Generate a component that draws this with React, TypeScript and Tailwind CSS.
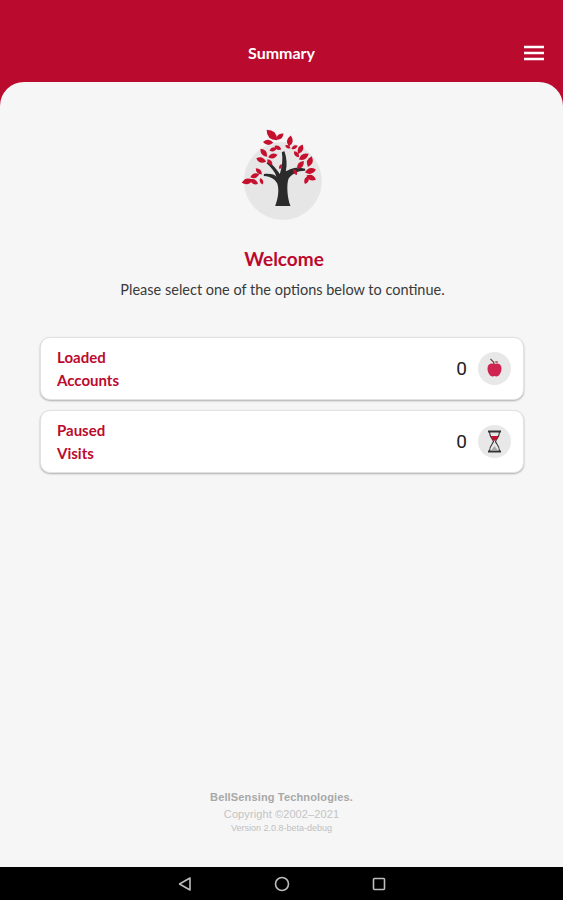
import React from "react";

// leaves of the tree: x, y, length, angle (in the 480x360 zoom space of the logo)
const leaves: [number, number, number, number][] = [
  [214, 75, 34, 45], [238, 80, 22, -40], [203, 97, 24, 5], [232, 113, 18, 30],
  [268, 93, 26, -80], [262, 110, 14, 30], [282, 112, 16, -30], [300, 118, 24, -65],
  [288, 133, 18, 50], [310, 140, 26, -30], [328, 155, 26, -70], [190, 128, 24, 50],
  [218, 118, 18, -20], [217, 138, 22, -15], [182, 150, 24, 20], [208, 157, 18, 50],
  [240, 170, 13, -70], [300, 165, 24, -50], [284, 186, 16, 60], [330, 183, 26, -15],
  [332, 203, 24, 25], [318, 210, 20, -70], [175, 184, 20, 45], [163, 197, 22, -20],
  [140, 214, 26, -15], [160, 215, 22, 30], [183, 214, 16, 70],
];

function TreeLogo() {
  return (
    <svg viewBox="4.5 0 480 360" className="w-[160px] h-[120px] block">
      <circle cx="247" cy="213" r="117" fill="#e6e6e6" />
      <path
        d="M224 288 C234 262 236 238 230 220 C222 206 212 200 190 198 L190 192 C212 190 222 194 228 200 C222 184 212 172 198 160 L204 154 C218 166 228 178 238 192 C244 172 248 150 244 126 L252 124 C259 146 260 166 256 184 C268 178 284 168 314 176 L314 182 C290 182 274 192 264 206 C258 224 260 262 270 288 Z"
        fill="#2b2b2b"
      />
      {leaves.map(([x, y, l, a], i) => {
        const s = l * 1.3;
        return (
          <path
            key={i}
            d={`M${-s / 2} 0 Q0 ${-s * 0.5} ${s / 2} 0 Q0 ${s * 0.5} ${-s / 2} 0Z`}
            fill="#c5102e"
            transform={`translate(${x} ${y}) rotate(${a})`}
          />
        );
      })}
    </svg>
  );
}

function AppleIcon() {
  return (
    <svg viewBox="0 0 33 33" className="w-[33px] h-[33px]">
      <circle cx="16.5" cy="16.5" r="16.5" fill="#e8e8e8" />
      <path d="M12.5 7 L15.5 10 L16.3 13" fill="none" stroke="#6b4a3a" strokeWidth="1.3" />
      <path d="M16.5 10 Q18.5 8.5 20.5 10 Q18.5 11.5 16.5 10Z" fill="#8a3a4a" />
      <path
        d="M16.5 12 C20 10.5 23.5 12 23.5 16.5 C23.5 21 20.5 24.5 18.5 24.5 C17.5 24.5 17 24 16.5 24 C16 24 15.5 24.5 14.5 24.5 C12.5 24.5 9.5 21 9.5 16.5 C9.5 12 13 10.5 16.5 12Z"
        fill="#cf2350"
      />
    </svg>
  );
}

function HourglassIcon() {
  return (
    <svg viewBox="0 0 33 33" className="w-[33px] h-[33px]">
      <circle cx="16.5" cy="16.5" r="16.5" fill="#e8e8e8" />
      <path d="M10 6.5 H23 M10 26.5 H23" stroke="#333" strokeWidth="1.8" />
      <path
        d="M11.5 7 C11.5 12 15 14.5 15.5 16.5 C15 18.5 11.5 21 11.5 26 M21.5 7 C21.5 12 18 14.5 17.5 16.5 C18 18.5 21.5 21 21.5 26"
        fill="none"
        stroke="#333"
        strokeWidth="1.1"
      />
      <path d="M12.5 11 H20.5 C19.8 13.5 17.5 15 16.5 16 C15.5 15 13.2 13.5 12.5 11Z" fill="#c5102e" />
      <path d="M13 25.5 L16.5 21 L20 25.5Z" fill="#aaa" />
    </svg>
  );
}

function SummaryCard({ top, bottom, icon }: { top: string; bottom: string; icon: React.ReactNode }) {
  return (
    <div className="h-[63px] flex items-center justify-between pl-[16px] pr-[12px] bg-white rounded-[10px] border border-[#e2e2e2] shadow-[0_1px_2px_rgba(0,0,0,0.3)]">
      <div className="text-[15px] leading-[22.5px] font-bold text-[#bb0a2e]">
        <div>{top}</div>
        <div>{bottom}</div>
      </div>
      <div className="flex items-center gap-[11px]">
        <span className="mt-[2px] text-[19px] text-[#222] font-['Roboto',sans-serif]">0</span>
        {icon}
      </div>
    </div>
  );
}

export default function App() {
  return (
    <div className="h-[900px] flex flex-col bg-[#ba0a2e] font-['Lato',sans-serif]">
      {/* Header */}
      <header className="h-[82px] shrink-0 flex items-end pb-[18px] relative">
        <h1 className="w-full text-center text-[16px] leading-[22px] font-bold text-white">Summary</h1>
        <svg viewBox="0 0 20 16" className="absolute right-[19px] top-[45px] w-[20px] h-[16px]">
          <path d="M0 2 H20 M0 8 H20 M0 14 H20" stroke="#fff" strokeWidth="2.4" />
        </svg>
      </header>

      {/* Content */}
      <main className="flex-1 flex flex-col items-stretch bg-[#f6f6f6] rounded-t-[24px] pt-[28px]">
        <div className="flex justify-center">
          <TreeLogo />
        </div>
        <h2 className="mt-[17px] pl-[5px] text-center text-[19px] leading-[24px] font-bold text-[#bb0a2e]">Welcome</h2>
        <p className="mt-[8px] pl-[2px] text-center text-[14.5px] leading-[22px] text-[#3a3a3a]">
          Please select one of the options below to continue.
        </p>

        <div className="mt-[36px] ml-[40px] mr-[39px] flex flex-col gap-[10px]">
          <SummaryCard top="Loaded" bottom="Accounts" icon={<AppleIcon />} />
          <SummaryCard top="Paused" bottom="Visits" icon={<HourglassIcon />} />
        </div>

        {/* Footer */}
        <footer className="mt-auto pb-[32px] text-center font-['Liberation_Sans',sans-serif]">
          <div className="text-[11px] leading-[14px] font-bold tracking-[0.15px] text-[#a8a8a8]">BellSensing Technologies.</div>
          <div className="mt-[3px] text-[11px] leading-[14px] tracking-[0.1px] text-[#c4c4c4]">Copyright ©2002–2021</div>
          <div className="text-[9px] leading-[14px] text-[#c0c0c0]">Version 2.0.8-beta-debug</div>
        </footer>
      </main>

      {/* Android nav bar */}
      <nav className="h-[33px] shrink-0 bg-black flex items-center justify-center gap-[81px]">
        <svg viewBox="0 0 16 16" className="w-[16px] h-[16px]">
          <path d="M13 2 V14 L2.5 8Z" fill="none" stroke="#bdbdbd" strokeWidth="1.6" strokeLinejoin="round" />
        </svg>
        <svg viewBox="0 0 16 16" className="w-[16px] h-[16px]">
          <circle cx="8" cy="8" r="6.5" fill="none" stroke="#bdbdbd" strokeWidth="1.6" />
        </svg>
        <svg viewBox="0 0 16 16" className="w-[16px] h-[16px]">
          <rect x="2.5" y="2.5" width="11" height="11" rx="1" fill="none" stroke="#bdbdbd" strokeWidth="1.6" />
        </svg>
      </nav>
    </div>
  );
}
